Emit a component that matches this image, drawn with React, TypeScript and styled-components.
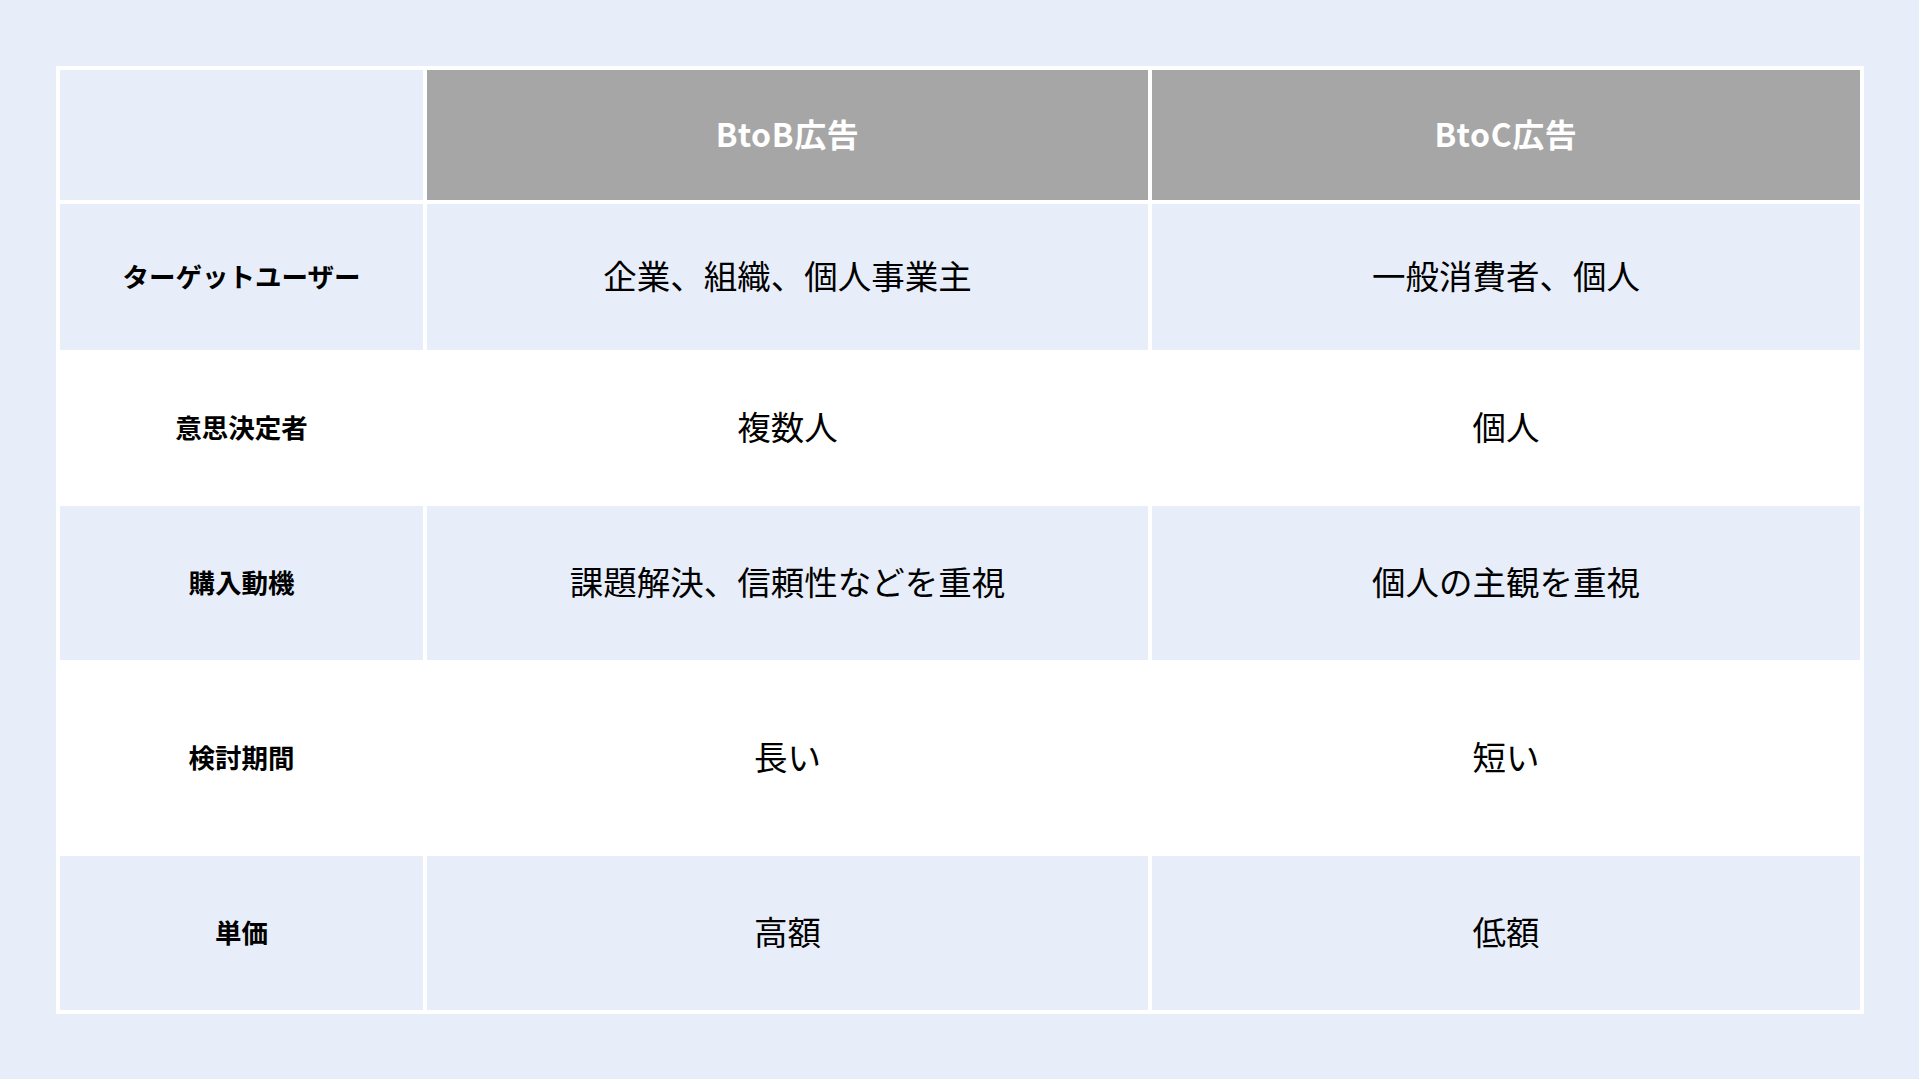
import React from "react";
import styled, {createGlobalStyle} from "styled-components";

const GlobalStyle = createGlobalStyle`
  html, body {
    margin: 0;
    padding: 0;
    background: #e8eef9;
  }

  body {
    font-family: "Noto Sans CJK JP", "Noto Sans", sans-serif;
    color: #000;
  }
`;

type Tone = "blue" | "white" | "grey";

interface IRow {
    label: string;
    btob: string;
    btoc: string;
    height: number;
}

const rows: IRow[] = [
    {label: "ターゲットユーザー", btob: "企業、組織、個人事業主", btoc: "一般消費者、個人", height: 146},
    {label: "意思決定者", btob: "複数人", btoc: "個人", height: 148},
    {label: "購入動機", btob: "課題解決、信頼性などを重視", btoc: "個人の主観を重視", height: 154},
    {label: "検討期間", btob: "長い", btoc: "短い", height: 188},
    {label: "単価", btob: "高額", btoc: "低額", height: 154},
];

const App: React.FC = () => {
    return (
        <Page>
            <GlobalStyle/>
            <Table>
                <colgroup>
                    <col style={{width: 363}}/>
                    <col style={{width: 721}}/>
                    <col style={{width: 708}}/>
                </colgroup>
                <thead>
                <Row $height={130}>
                    <Cell $tone="blue"/>
                    <HeadCell $tone="grey">BtoB広告</HeadCell>
                    <HeadCell $tone="grey">BtoC広告</HeadCell>
                </Row>
                </thead>
                <tbody>
                {rows.map((row, i) => {
                    const tone: Tone = i % 2 === 0 ? "blue" : "white";
                    return (
                        <Row key={row.label} $height={row.height}>
                            <LabelCell $tone={tone}>{row.label}</LabelCell>
                            <Cell $tone={tone}>{row.btob}</Cell>
                            <Cell $tone={tone}>{row.btoc}</Cell>
                        </Row>
                    );
                })}
                </tbody>
            </Table>
        </Page>
    );
};

const toneColors: Record<Tone, string> = {
    blue: "#e8eef9",
    white: "#ffffff",
    grey: "#a6a6a6",
};

const Page = styled.div`
  box-sizing: border-box;
  width: 1919px;
  height: 1079px;
  padding: 66px 0 0 56px;
`;

const Table = styled.table`
  table-layout: fixed;
  border-collapse: separate;
  border-spacing: 4px;
  width: 1808px;
  background: #ffffff;
`;

const Row = styled.tr<{ $height: number }>`
  height: ${(p) => p.$height}px;
`;

const Cell = styled.td<{ $tone: Tone }>`
  padding: 0 0 3px;
  background: ${(p) => toneColors[p.$tone]};
  text-align: center;
  vertical-align: middle;
  font-size: 33.5px;
  font-weight: 400;
  line-height: 1.4;
  color: #000;
`;

const HeadCell = styled(Cell).attrs({as: "th"})`
  font-size: 32px;
  font-weight: 700;
  color: #ffffff;
  letter-spacing: 0.6px;
`;

const LabelCell = styled(Cell)`
  font-size: 26.5px;
  font-weight: 700;
`;

export default App;
